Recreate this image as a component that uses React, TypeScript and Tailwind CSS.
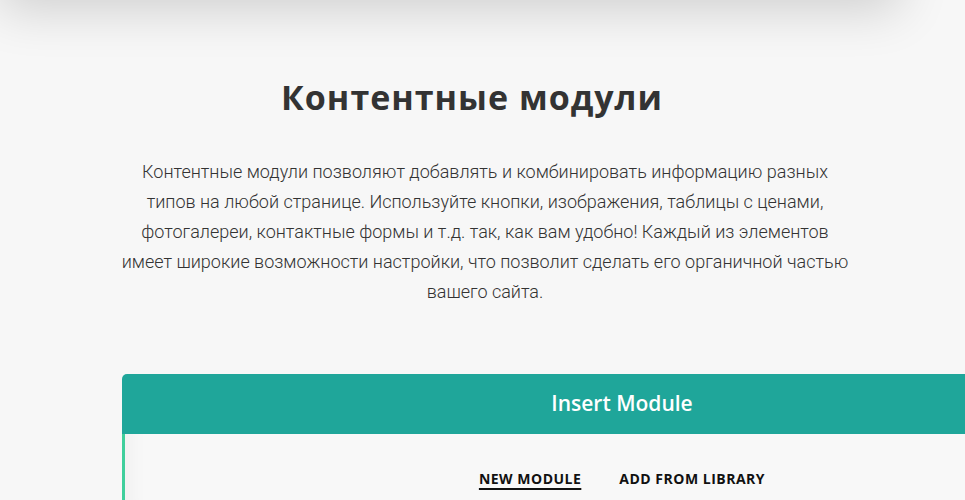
export default function App() {
  return (
    <div className="relative h-[500px] overflow-hidden bg-[#f7f7f7]">
      {/* shadow of the page header that sits just above the fold */}
      <div className="pointer-events-none absolute -top-[60px] left-[10px] h-[60px] w-[880px] shadow-[0_0_50px_10px_rgba(0,0,0,0.16)]" />

      <section className="pt-[74px]">
        <h2 className="pr-[21px] text-center font-['Open_Sans',sans-serif] text-[34px] font-bold leading-[46px] tracking-[1px] text-[#333]">
          Контентные модули
        </h2>
        <div className="mt-[37px] pl-[5px]">
          <p className="mx-auto max-w-[732px] text-center font-['Roboto',sans-serif] text-[18px] font-light leading-[30px] text-[#333]">
            Контентные модули позволяют добавлять и комбинировать информацию разных типов на любой странице.
            Используйте кнопки, изображения, таблицы с ценами, фотогалереи, контактные формы и т.д. так, как вам
            удобно! Каждый из элементов имеет широкие возможности настройки, что позволит сделать его органичной
            частью вашего сайта.
          </p>
        </div>

        <div className="ml-[122px] mt-[67px] w-[1000px]">
          <div className="flex h-[60px] items-center justify-center rounded-tl-[5px] bg-[#1fa69a]">
            <span className="font-['Open_Sans',sans-serif] text-[21px] font-semibold text-white">Insert Module</span>
          </div>
          <div className="h-[66px] border-l-[3px] border-[#3fcf9c] bg-[#f8f8f8] shadow-[inset_25px_0_20px_-20px_rgba(0,0,0,0.04)]">
            <div className="flex justify-center gap-[38px] pr-[3px] pt-[34px] font-['Open_Sans',sans-serif] text-[14px] font-bold tracking-[0.5px] text-[#111]">
              <span className="underline decoration-[1.5px] underline-offset-[4px]">NEW MODULE</span>
              <span>ADD FROM LIBRARY</span>
            </div>
          </div>
        </div>
      </section>
    </div>
  );
}
